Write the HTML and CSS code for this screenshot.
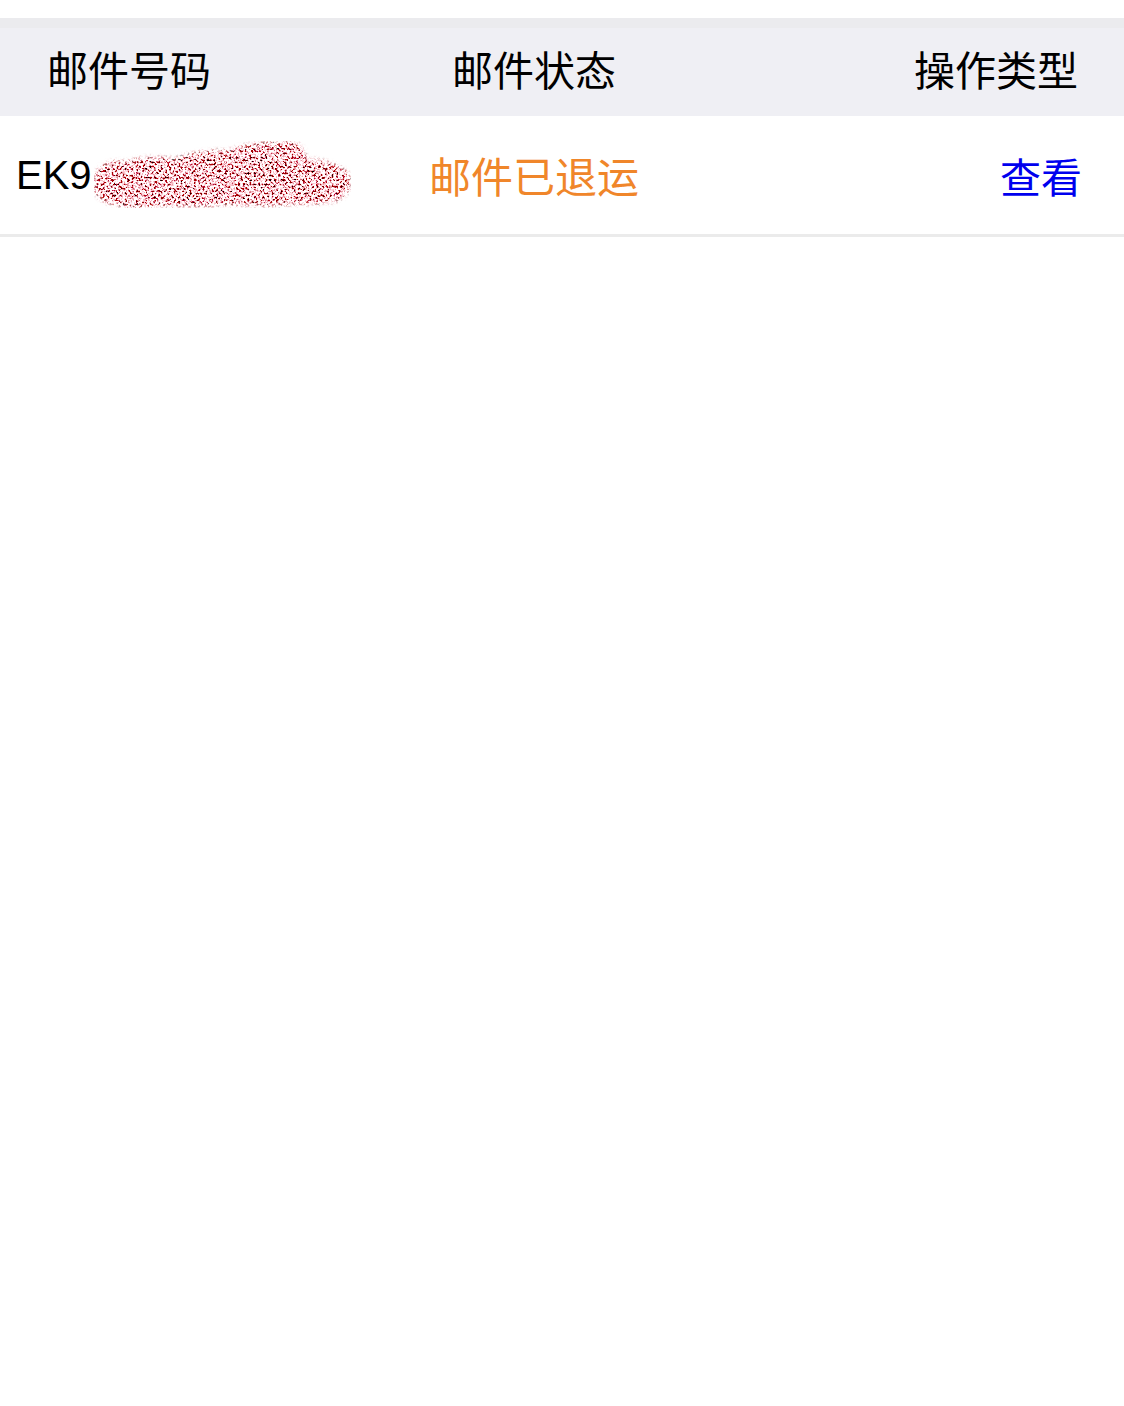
FILE: index.html
```html
<!DOCTYPE html>
<html lang="zh-CN">
<head>
  <meta charset="UTF-8">
  <meta name="viewport" content="width=device-width, initial-scale=1.0">
  <title>邮件查询</title>
  <link rel="stylesheet" href="styles.css">
</head>
<body>
  <div class="mail-list">
    <div class="list-head">
      <div class="col col-no">邮件号码</div>
      <div class="col col-status">邮件状态</div>
      <div class="col col-action">操作类型</div>
    </div>

    <div class="list-row">
      <div class="col col-no">
        <span class="mail-no">EK9</span>
        <!-- number hidden by a scribble -->
        <svg class="scribble" width="262" height="76" viewBox="0 0 262 76">
          <defs>
            <filter id="noise" x="0" y="0" width="100%" height="100%">
              <feTurbulence type="fractalNoise" baseFrequency="0.45" numOctaves="2" seed="7" result="grain"/>
              <feColorMatrix in="grain" type="matrix"
                values="4.0 0 0 0 -0.95
                        5.0 0 0 0 -1.85
                        5.0 0 0 0 -1.8
                        0 0 0 0 1" result="tint"/>
              <feGaussianBlur in="SourceGraphic" stdDeviation="2" result="edge"/>
              <feComposite in="tint" in2="edge" operator="in"/>
            </filter>
          </defs>
          <path filter="url(#noise)" fill="#000"
            d="M4 40 C6 30 18 24 34 27 C48 22 66 21 82 24 C100 18 118 14 136 16 C152 10 170 6 186 8 C200 4 212 8 214 24 C226 24 244 28 254 36 C262 46 258 60 244 66 C226 70 206 68 186 70 C166 72 146 68 126 70 C106 72 86 70 68 71 C48 74 26 72 12 66 C2 60 0 50 4 40 Z"/>
        </svg>
      </div>
      <div class="col col-status status-back">邮件已退运</div>
      <div class="col col-action"><a class="view-link" href="#">查看</a></div>
    </div>
  </div>
</body>
</html>
```

FILE: styles.css
```css
/* General Styles */
body {
  margin: 0;
  padding: 0;
  background: #fff;
  color: #000;
  font-family: "Liberation Sans", "Noto Sans CJK SC", sans-serif;
}

.mail-list {
  padding-top: 18px;
}

/* Header and row share the same three columns */
.list-head,
.list-row {
  display: grid;
  grid-template-columns: 368px 332px 1fr;
  align-items: center;
}

.list-head {
  box-sizing: border-box;
  height: 98px;
  border-top: 10px solid #ebebee;
  padding-bottom: 8px;
  background: #efeff4;
  font-family: "Noto Sans CJK SC", sans-serif;
  font-size: 41px;
}

.list-head .col-no {
  padding-left: 47px;
}

.list-head .col-action {
  padding-right: 46px;
}

/* Data row */
.list-row {
  height: 118px;
  border-bottom: 3px solid #ebebeb;
  font-size: 41px;
}

.list-row .col-no {
  display: flex;
  align-items: center;
  padding-left: 16px;
}

.list-row .col-action {
  padding-right: 42px;
}

.col {
  white-space: nowrap;
}

.col-status {
  text-align: center;
}

.col-action {
  text-align: right;
}

.mail-no {
  font-size: 40px;
}

.scribble {
  display: block;
  margin-top: -4px;
}

.status-back {
  font-family: "Noto Sans CJK SC", sans-serif;
  font-size: 42px;
  color: #f0862a;
  padding-bottom: 2px;
}

.view-link {
  font-family: "Noto Sans CJK SC", sans-serif;
  color: #0000ee;
  text-decoration: none;
}
```
